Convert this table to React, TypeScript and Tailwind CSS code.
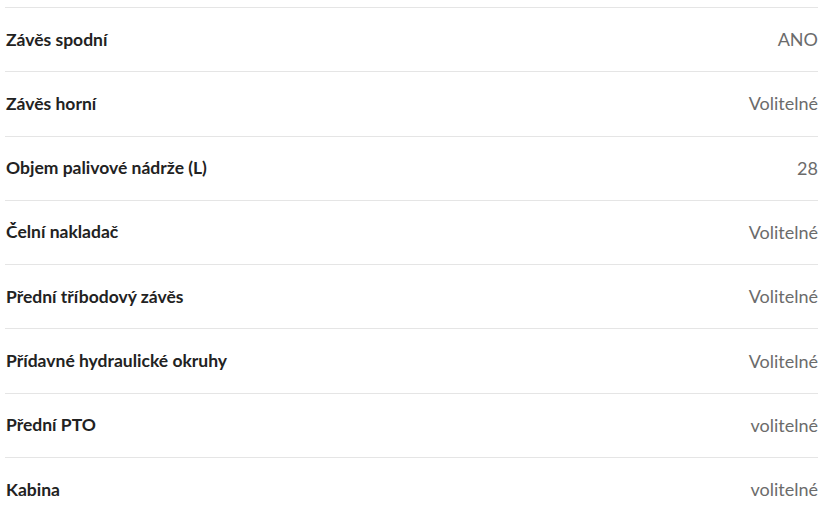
const rows: [string, string][] = [
  ["Závěs spodní", "ANO"],
  ["Závěs horní", "Volitelné"],
  ["Objem palivové nádrže (L)", "28"],
  ["Čelní nakladač", "Volitelné"],
  ["Přední tříbodový závěs", "Volitelné"],
  ["Přídavné hydraulické okruhy", "Volitelné"],
  ["Přední PTO", "volitelné"],
  ["Kabina", "volitelné"],
];

export default function App() {
  return (
    <div className="min-h-screen bg-white pt-[7px] pl-[5px] pr-[6px] font-['Lato',sans-serif]">
      {rows.map(([label, value]) => (
        <div
          key={label}
          className="flex h-[64.3px] items-center justify-between border-t border-[#e5e5e5] pl-px"
        >
          <span className="text-[17.5px] font-bold text-[#222]">{label}</span>
          <span className="text-[18px] text-[#6b6b6b]">{value}</span>
        </div>
      ))}
    </div>
  );
}
